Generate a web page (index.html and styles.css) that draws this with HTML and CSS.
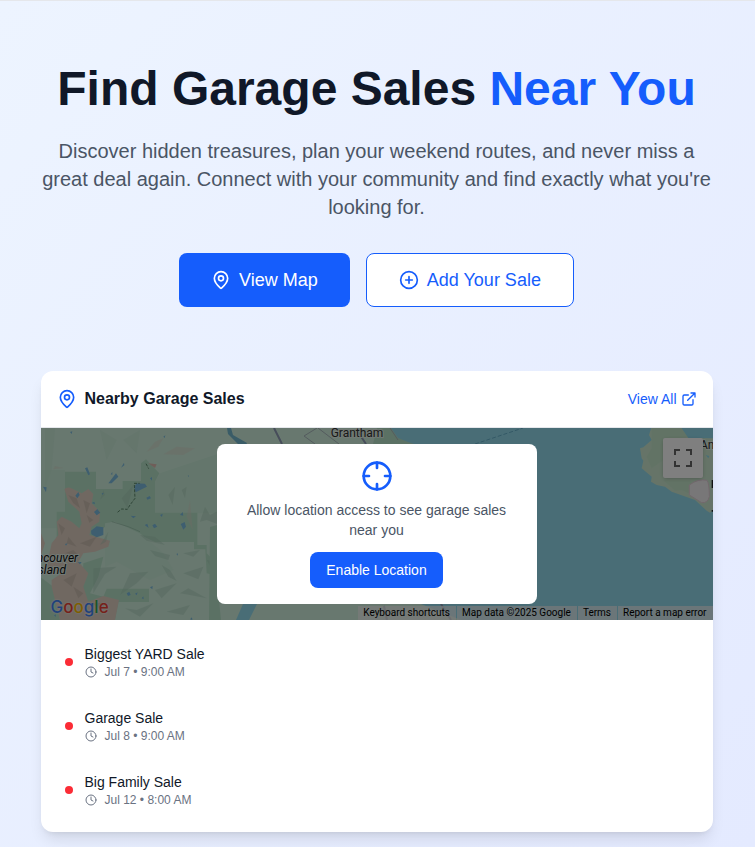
FILE: index.html
```html
<!DOCTYPE html>
<html lang="en">
<head>
<meta charset="utf-8">
<meta name="viewport" content="width=device-width, initial-scale=1">
<title>Find Garage Sales Near You</title>
<link rel="stylesheet" href="styles.css">
</head>
<body>
<main class="hero">
  <h1 class="hero-title">Find Garage Sales <span class="accent">Near You</span></h1>
  <p class="hero-text">Discover hidden treasures, plan your weekend routes, and never miss a great deal again. Connect with your community and find exactly what you're looking for.</p>
  <div class="actions">
    <a class="btn btn-primary" href="#map">
      <svg class="icon" viewBox="0 0 24 24"><path d="M20 10c0 4.993-5.539 10.193-7.399 11.799a1 1 0 0 1-1.202 0C9.539 20.193 4 14.993 4 10a8 8 0 0 1 16 0"/><circle cx="12" cy="10" r="3"/></svg>
      View Map
    </a>
    <a class="btn btn-outline" href="#add">
      <svg class="icon" viewBox="0 0 24 24"><circle cx="12" cy="12" r="10"/><path d="M8 12h8M12 8v8"/></svg>
      Add Your Sale
    </a>
  </div>

  <section class="card">
    <header class="card-header">
      <h2 class="card-title">
        <svg class="icon accent" viewBox="0 0 24 24"><path d="M20 10c0 4.993-5.539 10.193-7.399 11.799a1 1 0 0 1-1.202 0C9.539 20.193 4 14.993 4 10a8 8 0 0 1 16 0"/><circle cx="12" cy="10" r="3"/></svg>
        Nearby Garage Sales
      </h2>
      <a class="view-all" href="#all">View All
        <svg class="icon icon-sm" viewBox="0 0 24 24"><path d="M15 3h6v6M10 14 21 3M18 13v6a2 2 0 0 1-2 2H5a2 2 0 0 1-2-2V8a2 2 0 0 1 2-2h6"/></svg>
      </a>
    </header>

    <div class="map" id="map">
      <svg class="map-canvas" viewBox="0 0 672 192" preserveAspectRatio="xMidYMid slice">
        <rect width="672" height="192" fill="#d0f0de"/>
        <!-- western land: terrain, parks, mountains -->
        <g transform="translate(-1 -8) scale(.33333)">
          <path fill="#c9edd8" d="M0 150H75V325H0zM360 160L540 100V280H345V185z"/>
          <path fill="#b7e3c9" d="M75 155H168V207H248V183H303V130L318 118L358 160L345 185V278H472V375H500V400L540 440V470L500 460L496 388H462V366H345L270 330L215 305L190 325L160 370L110 400H50V275H75z"/>
          <path fill="#b7e3c9" d="M0 470L40 500L60 600H0zM130 430L190 410L175 470L150 520L190 530L200 506H327V546H235L225 600H120z"/>
          <path fill="#cbeeda" d="M195 310L225 305L300 340L370 400L400 450L330 480L230 425L195 440z"/>
          <path fill="#e0d0c3" d="M73 207Q85 197 100 208L125 220L145 207L160 222L155 250L180 275L178 305L155 320L148 345L210 362L205 380L165 395L130 400L115 425L145 460L130 500L145 545L190 528L237 540L225 600H60L35 500V480L65 460L20 440L35 370L55 345L50 305L65 290L95 305L118 325L125 310L118 275L85 245z"/>
          <path fill="#e0d0c3" d="M3 340L15 370L3 405z"/>
          <g fill="#9fc7b2" opacity=".35">
            <path d="M190 210L180 240L195 225zM245 235L280 195L262 265zM385 225L405 200L398 255zM425 210L440 200L435 235zM480 305L495 260L510 285L540 270V315L500 300zM205 335L180 375L198 365zM300 345L345 350L375 375L320 362zM330 390L390 405L385 420L345 408zM365 435L385 470L410 483L390 450zM430 460L490 440L475 478zM270 460L325 455L290 490L240 525zM430 400L480 390L460 410zM500 420L530 425L520 455zM160 445L230 440L195 462L160 520zM345 510L410 490L365 535zM420 520L445 505L500 535L450 525zM255 565L290 570L340 550L300 590zM380 575L450 555L430 585z"/>
          </g>
          <g fill="#b7aa9c" opacity=".4">
            <path d="M85 225L110 235L120 265L100 250zM130 240L150 250L140 280zM140 285L160 300L148 308zM55 310L75 325L65 345zM85 350L110 380L80 370zM120 370L170 350L150 380zM75 400L100 390L115 405zM70 480L110 460L95 500zM100 500L130 520L115 535zM155 550L200 548L185 570z"/>
          </g>
          <path fill="#ddd5c8" opacity=".4" d="M320 95L345 65L370 55L355 80zM370 103L410 80L465 85L430 105zM40 148L70 144L45 138zM440 290L450 240L458 330z"/>
          <path fill="#c1e5d3" opacity=".4" d="M15 25H45L35 150L15 205zM180 30L230 60L200 120zM250 60L300 30L290 100z"/>
          <g fill="#7dbde0">
            <path d="M205 190L228 160L235 170L215 190zM243 143L252 128L253 136zM212 163L217 156V164zM135 145L142 142L150 163L145 166zM106 227L115 216L119 225L112 235zM162 276L172 267L181 278L170 286zM153 332L170 319L190 322V345L170 352L154 343zM282 202L290 190L315 191L321 200L305 208L287 217zM330 175L336 171V182zM319 233L329 228L333 235L322 239zM272 287L288 289L280 295zM314 315L322 311L326 324zM337 316L345 311L352 320L342 325zM422 312L434 306L438 320L430 329zM360 285L368 281L366 291zM420 285L428 276L430 287zM90 36L97 34L95 42zM370 50L376 46L374 54zM9 200L20 202L18 217zM155 249L163 245L165 253zM185 220L192 218L187 225zM75 372L83 370L78 377zM113 427L125 426L120 433zM260 520L268 515L272 525L264 528zM285 521L293 517L290 526zM305 535L310 529L311 538zM330 502L338 498L337 508zM409 402L413 400L414 407zM443 166L447 167V172zM42 586L48 583L47 591zM450 598L456 592L457 600z"/>
          </g>
          <path d="M282 190H299M283 195L285 235L270 255L262 268L245 267L231 278M318 131L326 146" fill="none" stroke="#5d8a6e" stroke-width="3" stroke-dasharray="9 4"/>
          <path d="M325 130L350 133L345 144z" fill="#dfbdb2"/>
          <path d="M215 305L265 320L300 335" fill="none" stroke="#86ae9b" stroke-width="3" opacity=".5"/>
        </g>
        <!-- coast, strait and roads -->
        <path fill="#92dbed" d="M348 0H672V192H195L202 176H330L360 20z"/>
        <path fill="#b7e3c9" d="M336 0H350L357 10L367 14L373 16H332z"/>
        <path fill="#b7e3c9" d="M169 99L176 97V152L180 192H168z"/>
        <path fill="#d0f0de" d="M216 176H380L420 192H208z"/>
        <path fill="#75b8cf" d="M186 0H190L192 7L206 15L205 17H198L187 6z"/>
        <path fill="none" stroke="#8e9ab5" stroke-width="2" d="M233 0L241 16M317 4L325 16M343 178L346 192M400 176L410 192"/>
        <path fill="none" stroke="#a9b7bd" d="M276 0L263 8L274 16M277 0L298 16M349 0L357 12"/>
        <path d="M434 16L482 0" stroke="#68b2cc" stroke-dasharray="4 2"/>
        <!-- eastern peninsula -->
        <g transform="translate(494 -8) scale(.33333)">
          <path fill="#cce9d0" d="M350 20L342 45L350 60L325 82L315 85L320 115L325 122L320 145L350 170L348 185L365 195L390 200L410 215L480 240L515 272L525 278L540 268V20z"/>
          <path fill="#c0e6c8" opacity=".6" d="M350 20H440L460 50L390 60L385 120L350 145L335 110L350 85zM385 180H465L475 225L440 210L420 212z"/>
          <path fill="#92dbed" d="M438 22L535 22V55L480 54L460 54zM512 105L523 108L520 115z"/>
          <path fill="#f1eef0" stroke="#e4cfd9" stroke-width="3" d="M463 195Q490 175 516 181Q523 190 523 230Q518 250 500 248L463 225z"/>
          <path fill="#222" d="M530 180H536V204H530zM530 270H536V275H530z"/>
        </g>
        <g class="map-label">
          <text x="316" y="9" text-anchor="middle">Grantham</text>
          <text x="659" y="21">An</text>
        </g>
        <g class="map-label map-region">
          <text x="37" y="134" text-anchor="end">Vancouver</text>
          <text x="25" y="146" text-anchor="end">Island</text>
        </g>
      </svg>
      <button class="fullscreen" type="button" aria-label="Toggle fullscreen view">
        <svg viewBox="0 0 18 18"><path d="M0 0v6h2V2h4V0zm16 0h-4v2h4v4h2V0zm0 16h-4v2h6v-6h-2zM2 12H0v6h6v-2H2z"/></svg>
      </button>
      <div class="attribution"><span>Keyboard shortcuts</span><span>Map data ©2025 Google</span><span>Terms</span><span>Report a map error</span></div>
      <div class="logo"><span class="g-blue">G</span><span class="g-red">o</span><span class="g-yellow">o</span><span class="g-blue">g</span><span class="g-green">l</span><span class="g-red">e</span></div>
      <div class="shade">
        <div class="prompt">
          <svg class="icon icon-lg accent" viewBox="0 0 24 24"><circle cx="12" cy="12" r="10"/><path d="M22 12h-4M6 12H2M12 6V2M12 22v-4"/></svg>
          <p class="prompt-text">Allow location access to see garage sales near you</p>
          <button class="enable" type="button">Enable Location</button>
        </div>
      </div>
    </div>

    <ul class="sales">
      <li class="sale"><span class="dot"></span><div><h3 class="sale-name">Biggest YARD Sale</h3><p class="sale-time"><svg class="icon icon-xs" viewBox="0 0 24 24"><circle cx="12" cy="12" r="10"/><path d="M12 6v6l4 2"/></svg>Jul 7 • 9:00 AM</p></div></li>
      <li class="sale"><span class="dot"></span><div><h3 class="sale-name">Garage Sale</h3><p class="sale-time"><svg class="icon icon-xs" viewBox="0 0 24 24"><circle cx="12" cy="12" r="10"/><path d="M12 6v6l4 2"/></svg>Jul 8 • 9:00 AM</p></div></li>
      <li class="sale"><span class="dot"></span><div><h3 class="sale-name">Big Family Sale</h3><p class="sale-time"><svg class="icon icon-xs" viewBox="0 0 24 24"><circle cx="12" cy="12" r="10"/><path d="M12 6v6l4 2"/></svg>Jul 12 • 8:00 AM</p></div></li>
    </ul>
  </section>
</main>
</body>
</html>
```
FILE: styles.css
```css
* { box-sizing: border-box; margin: 0; padding: 0; }

body {
  font-family: "Liberation Sans", Arial, sans-serif;
  font-size: 16px;
  line-height: 24px;
  color: #101828;
}

a { color: inherit; text-decoration: none; }
button { font: inherit; border: 0; cursor: pointer; }

.hero {
  min-height: 100vh;
  padding: 64px 34px 14px 32px;
  border-top: 1px solid #e5e7eb;
  background: linear-gradient(to bottom right, #edf4ff, #e4eaff);
  text-align: center;
}

.accent { color: #155dfc; }

.hero-title {
  margin-bottom: 24px;
  font-size: 48px;
  line-height: 48px;
  font-weight: 700;
}

.hero-text {
  max-width: 672px;
  margin: 0 auto 32px;
  font-size: 20px;
  line-height: 28px;
  color: #4a5565;
}

.icon {
  flex: none;
  width: 20px;
  height: 20px;
  fill: none;
  stroke: currentColor;
  stroke-width: 2;
  stroke-linecap: round;
  stroke-linejoin: round;
}
.icon-xs { width: 12px; height: 12px; }
.icon-sm { width: 16px; height: 16px; }
.icon-lg { width: 32px; height: 32px; }

.actions {
  display: flex;
  flex-wrap: wrap;
  justify-content: center;
  gap: 16px;
  margin-bottom: 64px;
}

.btn {
  display: flex;
  align-items: center;
  gap: 8px;
  padding: 12px 32px;
  border-radius: 8px;
  font-size: 18px;
  line-height: 28px;
}
.btn-primary { background: #155dfc; color: #fff; }
.btn-outline { border: 1px solid #155dfc; background: #fff; color: #155dfc; }

.card {
  max-width: 672px;
  margin: 0 auto;
  overflow: hidden;
  border-radius: 12px;
  background: #fff;
  box-shadow: 0 10px 15px -3px rgb(0 0 0 / .1), 0 4px 6px -4px rgb(0 0 0 / .1);
  text-align: left;
}

.card-header {
  display: flex;
  align-items: center;
  justify-content: space-between;
  padding: 16px;
  border-bottom: 1px solid #e5e7eb;
}

.card-title {
  display: flex;
  align-items: center;
  gap: 8px;
  font-size: 16px;
  font-weight: 700;
}

.view-all {
  display: flex;
  align-items: center;
  gap: 4px;
  font-size: 14px;
  line-height: 20px;
  color: #155dfc;
}

.map {
  position: relative;
  height: 192px;
  overflow: hidden;
}

.map-canvas { display: block; width: 100%; height: 100%; }

.map-label {
  font-family: Roboto, sans-serif;
  font-size: 12px;
  fill: #333;
  stroke: #e4f3ea;
  stroke-width: 2px;
  paint-order: stroke;
}
.map-region { font-style: italic; fill: #111; }

.fullscreen {
  position: absolute;
  top: 10px;
  right: 10px;
  display: flex;
  align-items: center;
  justify-content: center;
  width: 40px;
  height: 40px;
  border-radius: 2px;
  background: #fff;
  box-shadow: 0 1px 4px -1px rgb(0 0 0 / .3);
}
.fullscreen svg { width: 18px; height: 18px; fill: #666; }

.attribution {
  position: absolute;
  right: 0;
  bottom: 0;
  display: flex;
  gap: 1px;
  font-family: Roboto, sans-serif;
  font-size: 10px;
  line-height: 14px;
  color: #000;
}
.attribution span { padding: 0 6px 0 5px; background: rgb(245 245 245 / .7); }

.logo {
  position: absolute;
  left: 10px;
  bottom: 2px;
  font-family: Inter, sans-serif;
  font-size: 17px;
  font-weight: 500;
  line-height: 22px;
  text-shadow: 0 0 2px #fff;
}
.g-blue { color: #4285f4; }
.g-red { color: #ea4335; }
.g-yellow { color: #fbbc04; }
.g-green { color: #34a853; }

.shade {
  position: absolute;
  inset: 0;
  display: flex;
  align-items: center;
  justify-content: center;
  background: rgb(0 0 0 / .5);
}

.prompt {
  display: flex;
  flex-direction: column;
  align-items: center;
  max-width: 320px;
  padding: 16px;
  border-radius: 8px;
  background: #fff;
  text-align: center;
  font-size: 14px;
  line-height: 20px;
}
.prompt-text { margin: 8px 0 12px; color: #4a5565; }

.enable {
  padding: 8px 16px;
  border-radius: 8px;
  background: #155dfc;
  color: #fff;
}

.sales {
  display: flex;
  flex-direction: column;
  gap: 4px;
  padding: 12px;
  list-style: none;
}

.sale {
  display: flex;
  align-items: center;
  gap: 12px;
  padding: 12px;
}

.dot {
  width: 8px;
  height: 8px;
  border-radius: 50%;
  background: #fb2c36;
}

.sale-name { font-size: 14px; line-height: 20px; font-weight: 400; }

.sale-time {
  display: flex;
  align-items: center;
  gap: 8px;
  font-size: 12px;
  line-height: 16px;
  color: #6a7282;
}
```
